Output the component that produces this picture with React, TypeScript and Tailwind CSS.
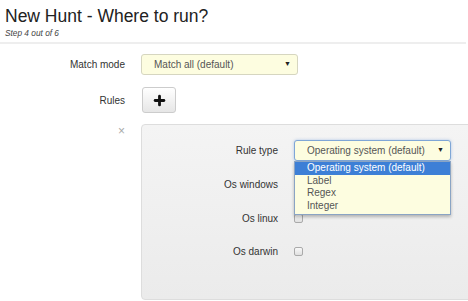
import { Plus } from "lucide-react";

const ruleOptions = ["Operating system (default)", "Label", "Regex", "Integer"];
const osRows = ["Os windows", "Os linux", "Os darwin"];

export default function App() {
  return (
    <div className="w-[468px] h-[301px] overflow-hidden bg-white text-[#333] font-['Liberation_Sans',Arial,sans-serif]">
      {/* Header */}
      <div className="pl-[5px] pt-[6px] h-[42px]">
        <h1 className="text-[17.5px] leading-[20px] text-[#222]">New Hunt - Where to run?</h1>
        <p className="text-[8.3px] italic text-[#444] mt-[1px]">Step 4 out of 6</p>
      </div>
      <div className="h-[2px] w-[466px] bg-[#eeeeee]" />

      {/* Form */}
      <div className="pt-[10px]">
        <div className="flex items-center h-[21px]">
          <label className="w-[125px] shrink-0 text-right text-[10px] text-[#333]">Match mode</label>
          <div className="ml-[16px] w-[157px] h-[21px] rounded-[3px] border border-[#d6d6c0] bg-[#fdfde0] flex items-center justify-between pl-[12px] pr-[6px] text-[10px] text-[#555]">
            <span>Match all (default)</span>
            <span className="text-[7px] text-[#222]">▼</span>
          </div>
        </div>

        <div className="flex items-center mt-[12px] h-[26px]">
          <label className="w-[125px] shrink-0 text-right text-[10px] text-[#333]">Rules</label>
          <button className="ml-[17px] w-[34px] h-[26px] rounded-[3px] border border-[#cccccc] bg-gradient-to-b from-white to-[#e6e6e6] flex items-center justify-center">
            <Plus size={15} strokeWidth={4.5} className="text-[#111]" />
          </button>
        </div>

        <div className="flex mt-[11px]">
          <div className="w-[141px] shrink-0 flex justify-end pr-[16px] pt-[1px]">
            <span className="text-[12px] leading-[12px] text-[#aaa]">×</span>
          </div>
          <div className="w-[340px] shrink-0 h-[176px] rounded-[4px] border border-[#dddddd] bg-gradient-to-b from-[#f4f4f4] to-[#ebebeb] pt-[15px]">
            <div className="flex items-center h-[21px]">
              <label className="w-[136px] shrink-0 text-right text-[10px] text-[#333]">Rule type</label>
              <div className="relative ml-[16px]">
                <div className="w-[157px] h-[21px] rounded-[3px] border border-[#7fa6d6] bg-[#fdfde0] flex items-center justify-between pl-[12px] pr-[6px] text-[10px] text-[#555] shadow-[0_0_3px_rgba(100,150,220,0.5)]">
                  <span>Operating system (default)</span>
                  <span className="text-[7px] text-[#222]">▼</span>
                </div>
                <div className="absolute left-0 top-[21px] w-[157px] border border-[#8aa4c4] bg-[#fdfde0] shadow-[0_2px_3px_rgba(0,0,0,0.25)] z-10">
                  {ruleOptions.map((opt, i) => (
                    <div
                      key={opt}
                      className={`h-[12.5px] leading-[12.5px] pl-[12px] text-[10px] ${
                        i === 0 ? "bg-[#3d7fd6] text-white" : "text-[#555]"
                      }`}
                    >
                      {opt}
                    </div>
                  ))}
                  <div className="h-[2px]" />
                </div>
              </div>
            </div>

            {osRows.map((row, i) => (
              <div key={row} className={`flex items-center h-[21px] ${i === 0 ? "mt-[13px]" : "mt-[12.5px]"}`}>
                <label className="w-[136px] shrink-0 text-right text-[10px] text-[#333]">{row}</label>
                <div className="ml-[16px] w-[9px] h-[9px] rounded-[2px] border border-[#aaaaaa] bg-gradient-to-b from-[#f8f8f8] to-[#e0e0e0]" />
              </div>
            ))}
          </div>
        </div>
      </div>
    </div>
  );
}
